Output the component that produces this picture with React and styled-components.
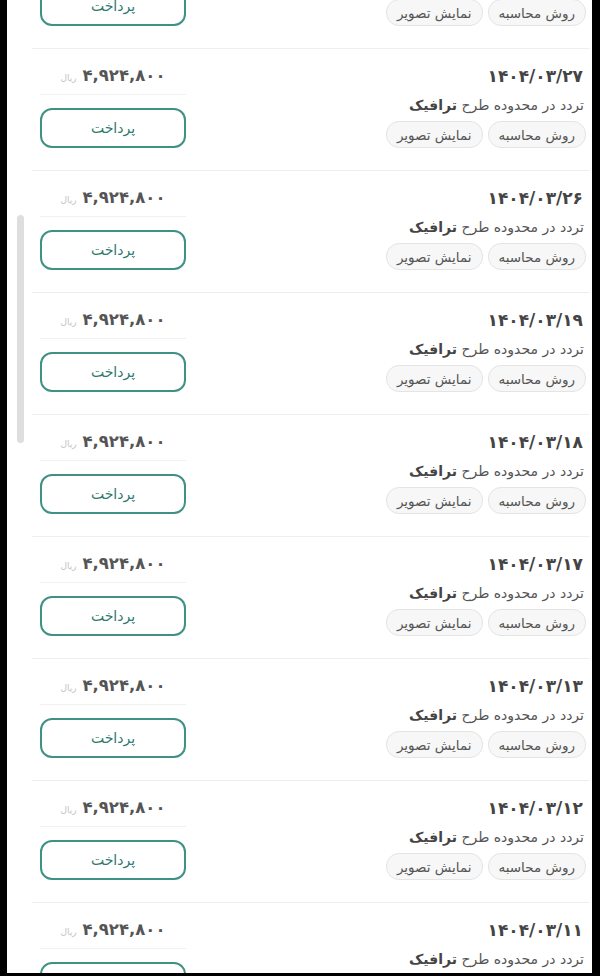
import styled, { createGlobalStyle } from 'styled-components'

const GlobalStyle = createGlobalStyle`
  html, body {
    margin: 0;
    padding: 0;
    background: #000;
  }
  body {
    font-family: "DejaVu Sans", sans-serif;
  }
`

const fines = [
  { date: '۱۴۰۴/۰۳/۲۸' },
  { date: '۱۴۰۴/۰۳/۲۷' },
  { date: '۱۴۰۴/۰۳/۲۶' },
  { date: '۱۴۰۴/۰۳/۱۹' },
  { date: '۱۴۰۴/۰۳/۱۸' },
  { date: '۱۴۰۴/۰۳/۱۷' },
  { date: '۱۴۰۴/۰۳/۱۳' },
  { date: '۱۴۰۴/۰۳/۱۲' },
  { date: '۱۴۰۴/۰۳/۱۱' },
]

const FineRow = ({ date }) => (
  <Row>
    <Info>
      <DateText>{date}</DateText>
      <Desc>
        تردد در محدوده طرح <b>ترافیک</b>
      </Desc>
      <Chips>
        <Chip>روش محاسبه</Chip>
        <Chip>نمایش تصویر</Chip>
      </Chips>
    </Info>
    <PayColumn>
      <Amount>
        ۴,۹۲۴,۸۰۰ <Unit>ریال</Unit>
      </Amount>
      <Divider />
      <PayButton>پرداخت</PayButton>
    </PayColumn>
  </Row>
)

const App = () => {
  return (
    <>
      <GlobalStyle />
      <Screen>
        <List>
          {fines.map((f, i) => (
            <FineRow key={i} date={f.date} />
          ))}
        </List>
        <ScrollThumb />
      </Screen>
    </>
  )
}

export default App

const Screen = styled.div`
  position: relative;
  margin: 0 8px 0 7px;
  height: 973px;
  background: #fff;
  overflow: hidden;
`

const List = styled.div`
  margin-top: -73px;
  padding: 0 3px 0 25px;
  direction: rtl;
`

const Row = styled.div`
  display: flex;
  justify-content: space-between;
  align-items: flex-start;
  height: 106px;
  padding: 15px 5px 0 8px;
  border-bottom: 1px solid #eeeeee;
`

const Info = styled.div`
  display: flex;
  flex-direction: column;
  align-items: flex-start;
`

const DateText = styled.div`
  font-size: 17px;
  font-weight: bold;
  line-height: 24px;
  color: #444;
  margin-right: 1px;
`

const Desc = styled.div`
  margin-top: 6px;
  font-size: 14px;
  line-height: 22px;
  color: #555;
  b {
    color: #444;
  }
`

const Chips = styled.div`
  display: flex;
  gap: 5px;
  margin-top: 5px;
  margin-right: -2px;
`

const Chip = styled.span`
  display: inline-flex;
  align-items: center;
  height: 25px;
  padding: 0 10px;
  border: 1px solid #e4e4e4;
  border-radius: 13px;
  background: #f7f7f7;
  font-size: 13.5px;
  color: #555;
`

const PayColumn = styled.div`
  width: 146px;
  display: flex;
  flex-direction: column;
  align-items: stretch;
`

const Amount = styled.div`
  text-align: center;
  font-size: 16.5px;
  font-weight: bold;
  line-height: 24px;
  color: #555;
`

const Unit = styled.span`
  font-size: 9px;
  font-weight: normal;
  color: #c4c4c4;
`

const Divider = styled.div`
  height: 1px;
  margin-top: 4px;
  background: #f1f1f1;
`

const PayButton = styled.button`
  margin: 13px 0 0 0;
  height: 40px;
  border: 2px solid #3f9184;
  border-radius: 12px;
  background: #fff;
  font-family: "DejaVu Sans", sans-serif;
  font-size: 14px;
  color: #2e7a6e;
  cursor: pointer;
`

const ScrollThumb = styled.div`
  position: absolute;
  left: 10px;
  top: 215px;
  width: 7px;
  height: 228px;
  border-radius: 4px;
  background: #dedede;
`
